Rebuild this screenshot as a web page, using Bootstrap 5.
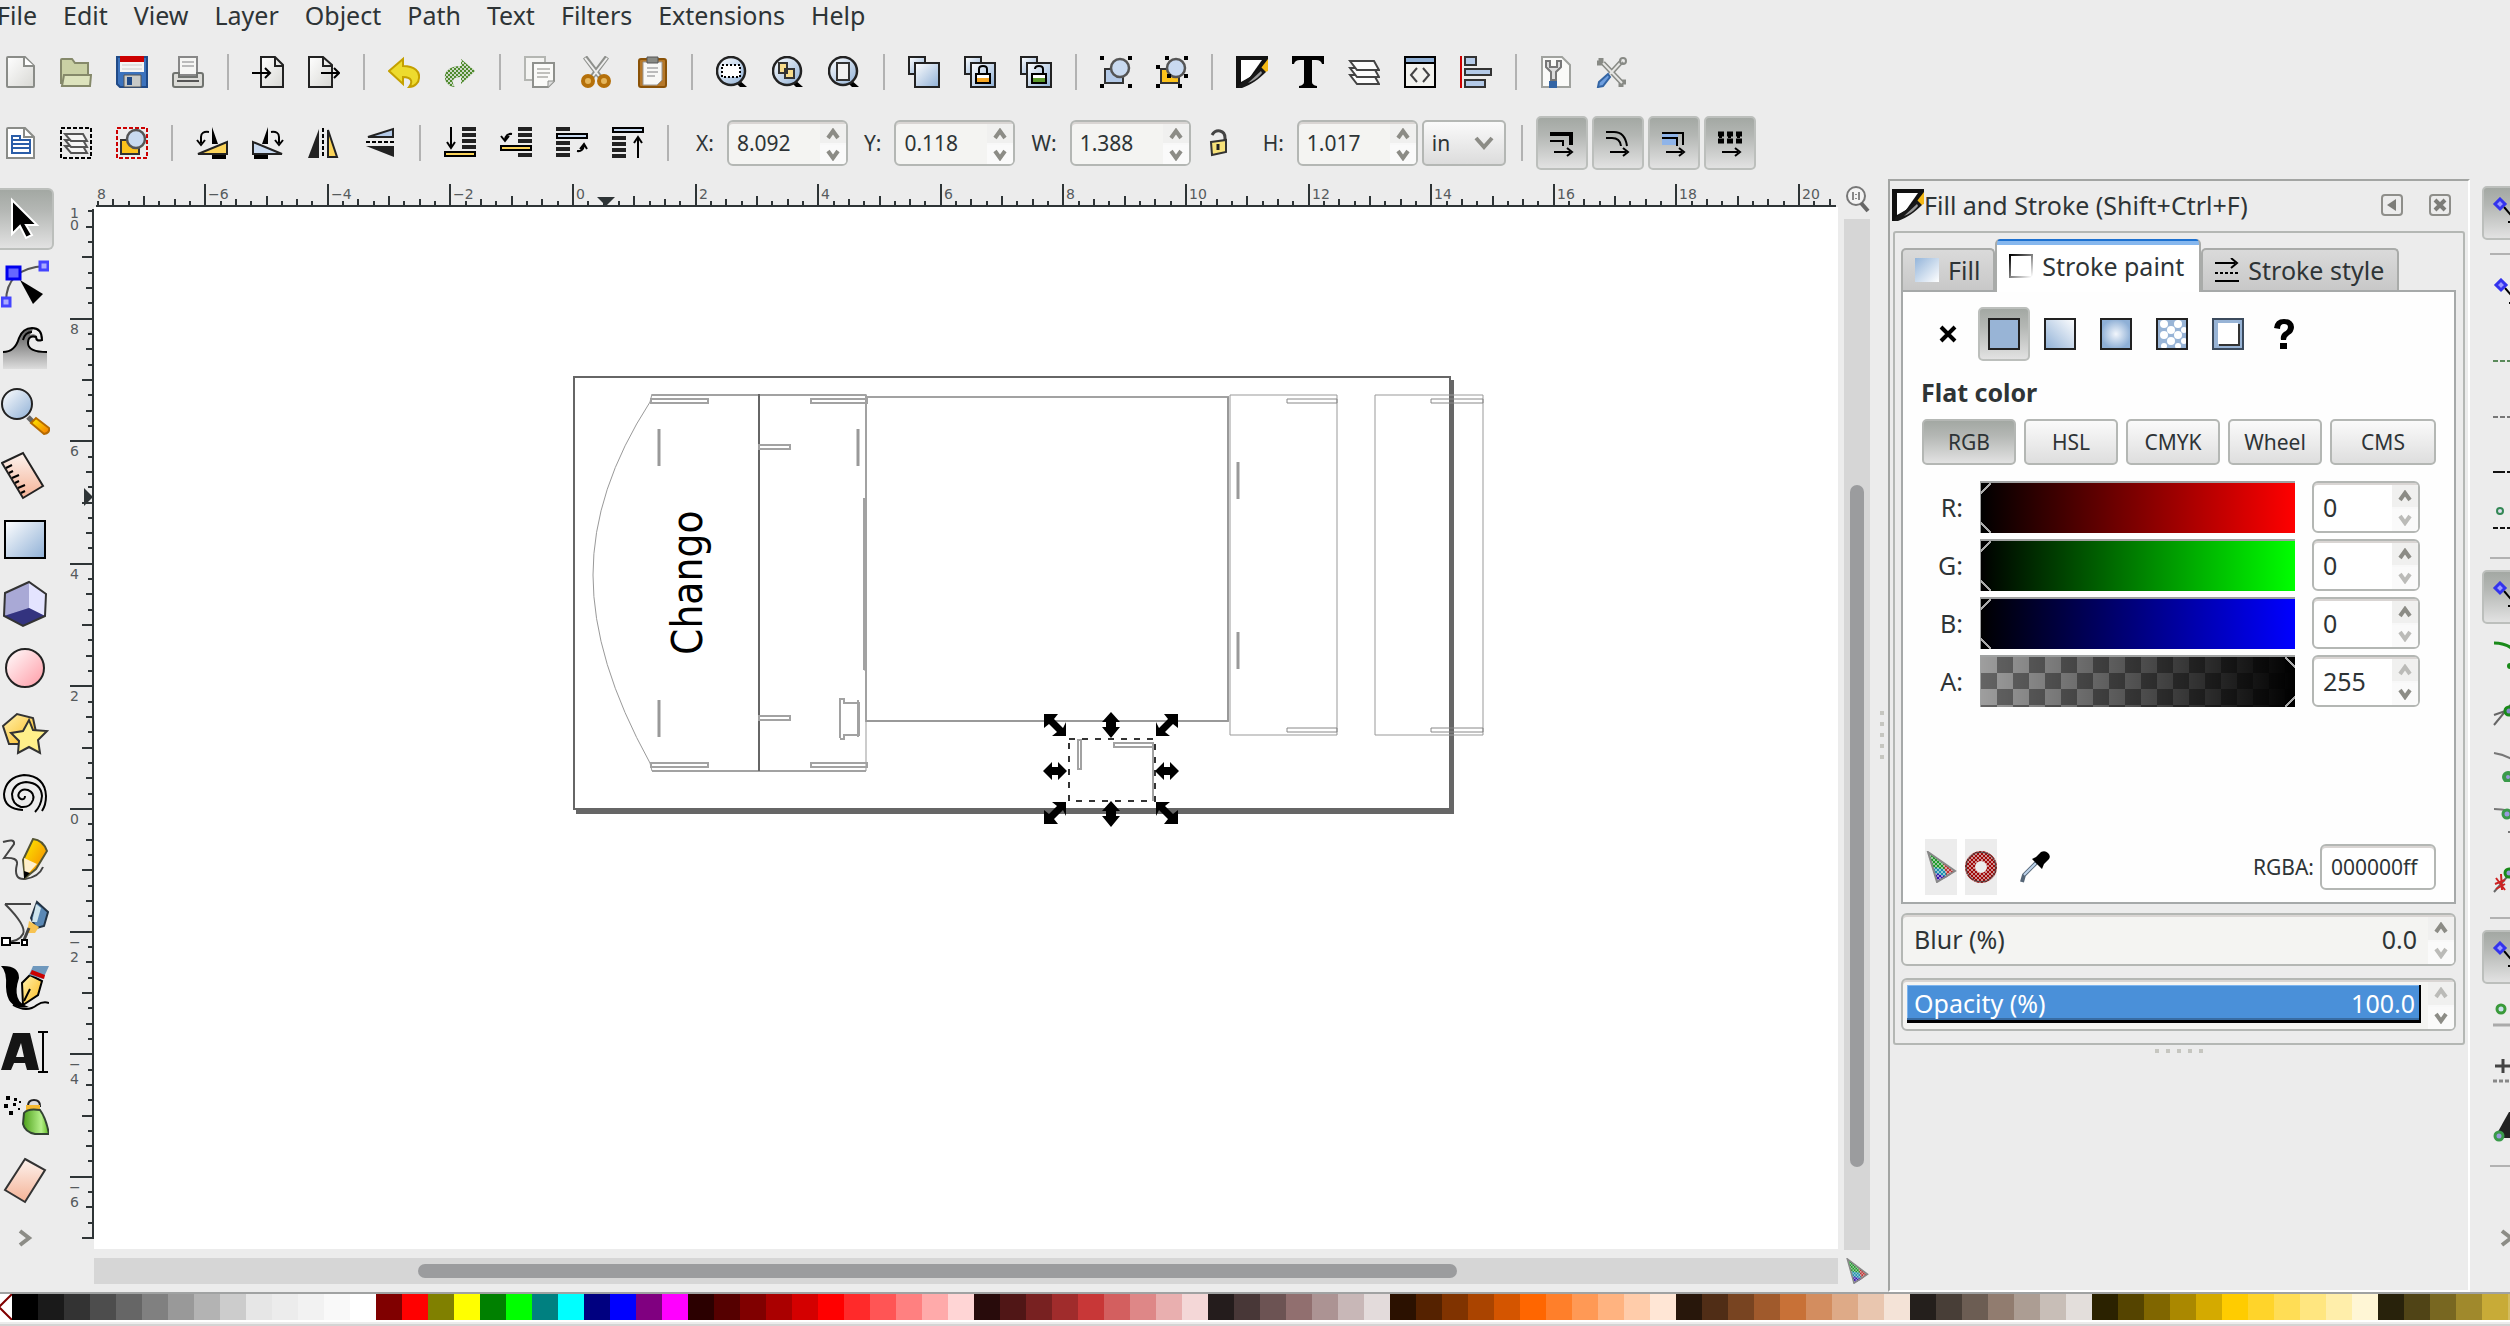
<!DOCTYPE html>
<html lang="en">
<head>
<meta charset="utf-8">
<meta name="viewport" content="width=device-width, initial-scale=1">
<title>Inkscape</title>
<link href="https://cdn.jsdelivr.net/npm/bootstrap@5.3.0/dist/css/bootstrap.min.css" rel="stylesheet">
<style>
:root{--ui:#ececec;--ink:#2e3436;--edge:#b4b7b4}
body{background:var(--ui);color:var(--ink);font:25px/34px "Noto Sans",sans-serif;height:100vh;overflow:hidden}
svg{display:block;flex:none}
button{color:inherit;font:inherit}
.menus{height:36px;gap:26px;padding-top:0}
.menus a{color:var(--ink);text-decoration:none;line-height:30px}
.menus a:first-child{margin-left:-3px}
.tools{height:72px;margin-left:-8px;font-size:21px}
.tools label{margin-right:13px}
.tool{width:56px;height:54px;border:0;background:none;padding:0;display:flex;align-items:center;justify-content:center;flex:none}
.on{background:linear-gradient(#a3a8a3,#b4b7b4 35%,#e2e2e2);border:2px solid #bcbfbc;border-radius:5px}
.tools .on{width:52px;margin:0 2px}
.vsep{width:24px;height:36px;flex:none;background:linear-gradient(#b2b2b2,#b2b2b2) center/2px 100% no-repeat}
.hsep{height:24px;flex:none;background:linear-gradient(#b2b2b2,#b2b2b2) 8px center/100% 2px no-repeat}
.spin{display:flex;border:2px solid var(--edge);border-radius:6px;background:#f4f4f2;box-shadow:inset 0 2px #d9d5d3;overflow:hidden;height:46px;width:121px}
.spin input{border:0;background:none;min-width:0;flex:1;color:var(--ink);padding:0 0 0 8px;font-size:21px;outline:0}
.spin .arrows{width:26px;flex:none;display:flex;flex-direction:column;background:#f8f8f8;gap:2px;margin-top:2px}
.spin .arrows button{flex:1;border:0;padding:0;background:#f0f0ef;display:flex;align-items:center;justify-content:center;color:#8c8c86;min-height:0}
.spin .arrows button:disabled{color:#bbbbb8}
.spin .arrows button:last-child{background:#fafafa}
.paint .spin{width:108px;height:52px;background:#fff}
.paint .spin input{font-size:25px;padding-left:9px}
.unit{appearance:none;width:84px;height:46px;border:2px solid var(--edge);border-radius:5px;background:linear-gradient(#fafafa,#dcdcdc);font-size:21px;padding:0 0 0 8px;color:var(--ink)}
.unitbox{display:grid}
.unitbox>*{grid-area:1/1}
.unitbox svg{justify-self:end;align-self:center;margin-right:12px;pointer-events:none}
.toolbox{width:66px;padding-top:9px}
.toolbox .tool{width:54px;height:64px;padding-right:5px}
.toolbox .on{border-left:0;border-radius:0 6px 6px 0;height:62px;margin-bottom:2px}
.ruler{background:var(--ui)}
.ruler text{font:14px "DejaVu Sans",sans-serif;fill:#555a5c}
.paper{background:#fff}
.trough{background:#d6d6d6}
.thumb{background:#9b9c9e;border-radius:7px}
.dots{display:flex;gap:7px;align-items:center;justify-content:center}
.dots i{width:4px;height:4px;background:#c6c6c0}
.dock{width:582px;border:2px solid #a3a5a3;border-right-color:#fff;border-bottom-color:#fff;border-left-width:2px}
.frame{border:2px solid var(--edge);border-radius:3px;margin:0 3px;padding:6px 7px 12px 6px}
.wbtn{width:22px;height:22px;padding:0;border:2px solid #8e8e8a;border-radius:4px;background:none;color:#7c7c78;display:flex;align-items:center;justify-content:center}
.tabs{border:0;flex-wrap:nowrap;align-items:flex-end}
.tabs .nav-link{display:flex;align-items:center;gap:9px;color:var(--ink);border:2px solid #a9aba9;border-bottom:0;border-radius:5px 5px 0 0;background:linear-gradient(#dadada,#c8c8c8);padding:0 13px 0 12px;height:42px;margin:0;white-space:nowrap}
.tabs .nav-link.active{background:linear-gradient(#1d71d0 2px,#86b7ee 2px,#86b7ee 6px,#fff 6px);border-color:#a9aba9;border-top:0;height:53px;color:var(--ink);padding:0 15px 0 12px;margin-bottom:-2px}
.page{background:#fefefe;border:2px solid #a6a9a9;height:614px;padding:15px 18px 7px}
.paints{margin-left:-1px}
.paints .on{width:52px;margin:0 2px}
.modes{gap:8px}
.modes .btn{flex:0 1 94px;height:46px;padding:0;font-size:21px;line-height:42px;border:2px solid var(--edge);border-radius:5px;background:linear-gradient(#fafafa,#dedede);color:var(--ink)}
.modes .btn:last-child{flex:1}
.modes .btn.on{background:linear-gradient(#a3a8a3,#b4b7b4 35%,#e2e2e2)}
.chan{display:grid;grid-template-columns:42px 1fr 108px;gap:6px 17px;align-items:center;margin-right:16px}
.chan label{text-align:right}
.chan input[type=range]{appearance:none;height:52px;width:100%;margin:0;border-top:2px solid #a0a2a2;border-left:1px solid #a0a2a2;background:var(--bar)}
.chan input[type=range]::-webkit-slider-thumb{appearance:none;width:10px;height:50px;background:linear-gradient(135deg,#000 6px,#aaa 6px,#aaa 8px,transparent 8px) top/10px 14px no-repeat,linear-gradient(45deg,#000 6px,#aaa 6px,#aaa 8px,transparent 8px) bottom/10px 14px no-repeat}
.chan input.alpha::-webkit-slider-thumb{background:linear-gradient(225deg,#000 6px,#aaa 6px,#aaa 8px,transparent 8px) top/10px 14px no-repeat,linear-gradient(315deg,#000 6px,#aaa 6px,#aaa 8px,transparent 8px) bottom/10px 14px no-repeat}
.ghost{width:32px;height:56px;border:0;padding:0;background:#ececec}
.rgba{width:116px;height:46px;border:2px solid var(--edge);border-radius:6px;box-shadow:inset 0 2px #d9d5d3;font-size:21px;color:var(--ink);padding:0 0 0 9px}
.meter.spin{width:auto;height:53px;align-items:stretch}
.meter .body{flex:1;display:flex;align-items:center;justify-content:space-between;margin:5px 7px 6px 4px;padding:0 4px 0 7px}
.meter .body input{text-align:right;font-size:25px;width:120px;flex:none;padding:0}
.full .body{background:#4a90d9;color:#fff;border-right:2px solid #000;border-bottom:3px solid #000;box-shadow:inset 0 -2px #386ca3,inset 1px 1px #7db4ee}
.full .body input{color:#fff}
.snap{width:40px;padding:7px 0 0 12px;overflow:hidden}
.snap .tool{height:56px;width:56px;padding-left:2px}
.snap .on{height:54px;margin-bottom:2px;padding:0}
.palette{border-top:2px solid #a0a2a2;margin-left:-14px;overflow:hidden}
.palette button{width:26px;height:26px;border:0;padding:0;flex:none}
.foot{height:6px;border-top:2px solid #fff;border-bottom:2px solid #d4d4d4;background:#ececec}
.ln{fill:none;stroke:#000;stroke-width:2}
</style>
</head>
<body class="d-flex flex-column">
<svg width="0" height="0" class="position-absolute" aria-hidden="true">
<defs>
<linearGradient id="gb" x1="0" y1="0" x2="1" y2="1"><stop offset="0" stop-color="#fff"/><stop offset="1" stop-color="#8fb0d6"/></linearGradient>
<linearGradient id="gb2" x1="1" y1="0" x2="0" y2="1"><stop offset="0" stop-color="#fff"/><stop offset="1" stop-color="#8fb0d6"/></linearGradient>
<linearGradient id="gf" x1="0" y1="0" x2="1" y2="1"><stop offset="0" stop-color="#94b5da"/><stop offset="1" stop-color="#fff"/></linearGradient>
<radialGradient id="gr"><stop offset="0" stop-color="#f2f6fc"/><stop offset="1" stop-color="#8fb0d6"/></radialGradient>
<linearGradient id="gp" x1="0" y1="0" x2="1" y2="1"><stop offset="0" stop-color="#fff"/><stop offset="1" stop-color="#d8d8d4"/></linearGradient>
<linearGradient id="gk" x1="0" y1="0" x2="1" y2="1"><stop offset="0" stop-color="#000"/><stop offset="1" stop-color="#fff"/></linearGradient>
<linearGradient id="gy" x1="0" y1="0" x2="1" y2="1"><stop offset="0" stop-color="#fff3b0"/><stop offset="1" stop-color="#fcb819"/></linearGradient>
<linearGradient id="go" x1="0" y1="0" x2="1" y2="1"><stop offset="0" stop-color="#fdf000"/><stop offset="1" stop-color="#f57900"/></linearGradient>
<linearGradient id="gpk" x1="0" y1="0" x2="1" y2="1"><stop offset="0" stop-color="#fff"/><stop offset="1" stop-color="#ff9aa5"/></linearGradient>
<linearGradient id="gsk" x1="0" y1="0" x2="0" y2="1"><stop offset="0" stop-color="#fdf3ee"/><stop offset="1" stop-color="#f4b296"/></linearGradient>
<linearGradient id="gw" x1="0" y1="0" x2="0" y2="1"><stop offset="0" stop-color="#555"/><stop offset="1" stop-color="#ddd"/></linearGradient>
<linearGradient id="gg" x1="0" y1="0" x2="1" y2="0"><stop offset="0" stop-color="#4ca019"/><stop offset=".7" stop-color="#b5f08a"/><stop offset="1" stop-color="#5cb81c"/></linearGradient>
<pattern id="dither" width="4" height="4" patternUnits="userSpaceOnUse"><rect width="2" height="2" fill="#ececec"/><rect x="2" y="2" width="2" height="2" fill="#ececec"/></pattern>
<symbol id="up" viewBox="0 0 14 12"><path d="M2 10 7 3l5 7" fill="none" stroke="currentColor" stroke-width="4"/></symbol>
<symbol id="down" viewBox="0 0 14 12"><path d="m2 2 5 7 5-7" fill="none" stroke="currentColor" stroke-width="4"/></symbol>
<symbol id="fillstroke" viewBox="0 0 32 32"><path d="M0 0h32v6L20 22 4 32H0z" fill="#111"/><path d="M5 4h21L14 21l-9 5z" fill="#fff"/><path d="m32 3-7 9 2 5 5-2z" fill="#f5b915"/><path d="m25 11 5 5C22 24 16 28 6 32c-3 1-5-1-2-4 6-4 13-9 21-17z" fill="#181818"/><path d="m25 15 1 2c-5 6-9 8-14 10z" fill="#999"/></symbol>
<symbol id="lens" viewBox="0 0 32 32"><path d="m22 23 9 8H24l-4-4z" fill="#000"/><circle cx="15" cy="15" r="14" fill="url(#gb)" stroke="#222" stroke-width="2.500"/></symbol>
<symbol id="dup" viewBox="0 0 32 32"><path d="M1 1h16v17H1z" fill="url(#gb)" stroke="#222" stroke-width="2"/><path d="M7 7h24v24H7z" fill="url(#gb)" stroke="#222" stroke-width="2"/></symbol>
<symbol id="shapes" viewBox="0 0 32 32"><path d="M5 13h18v14H5z" fill="currentColor" stroke="#333" stroke-width="2"/><circle cx="20" cy="12" r="9" fill="#c9daf0" stroke="#555" stroke-width="2.500"/></symbol>
<symbol id="corners" viewBox="0 0 32 32"><path d="M0 0h4v4H0zM28 0h4v4h-4zM0 28h4v4H0zM28 28h4v4h-4z"/></symbol>
<symbol id="snapnode" viewBox="0 0 32 32"><path d="m10 10 12 14m1-7v8h-9" fill="none" stroke="#000" stroke-width="2"/><path d="M6 2 11 7 6 12 1 7z" fill="#99f" stroke="#33e" stroke-width="3"/></symbol>
<symbol id="cms" viewBox="0 0 32 32"><path d="M3 1 30 20 12 31z" fill="#1f9a2a"/><path d="M7 16 30 20 12 31z" fill="#1b8fae"/><path d="m18 12 12 8-8 6z" fill="#c03030"/><path d="m10 22 12 4-10 5z" fill="#3510b0"/><path d="M3 1 30 20 12 31z" fill="url(#dither)" fill-opacity=".6" stroke="#888" stroke-width="2"/></symbol>
</defs>
</svg>

<nav class="menus d-flex" aria-label="Menu">
<a href="#">File</a><a href="#">Edit</a><a href="#">View</a><a href="#">Layer</a><a href="#">Object</a><a href="#">Path</a><a href="#">Text</a><a href="#">Filters</a><a href="#">Extensions</a><a href="#">Help</a>
</nav>

<div class="tools d-flex align-items-center" role="toolbar" aria-label="Commands">
<button class="tool" aria-label="New"><svg width="32" height="32"><path d="M3 2q0-1 1-1h17l9 9v20q0 1-1 1H4q-1 0-1-1z" fill="url(#gp)" stroke="#8a8c88" stroke-width="2"/><path d="M20 1v9h10" fill="#fff" stroke="#8a8c88" stroke-width="2"/></svg></button>
<button class="tool" aria-label="Open"><svg width="32" height="32"><path d="M1 28V4q0-1 1-1h10l3 4h13v14" fill="#c9d0a4" stroke="#85896a" stroke-width="2"/><path d="M4 19h27l-1 11H2z" fill="#dde3bd" stroke="#85896a" stroke-width="2"/></svg></button>
<button class="tool" aria-label="Save"><svg width="32" height="32"><path d="M1 1h30v30H4l-3-3z" fill="#3b72bd" stroke="#204a87" stroke-width="2"/><path d="M4 0h24v6H4z" fill="#c00"/><path d="M4 6h24v10H4z" fill="#f4f4f4"/><path d="M6 9h20M6 13h20" stroke="#ccc"/><path d="M8 19h17v12H8z" fill="#c8cac8" stroke="#555"/><path d="M11 21h5v8h-5z" fill="#204a87"/></svg></button>
<button class="tool" aria-label="Print"><svg width="32" height="32"><path d="M7 1h18v18H7z" fill="#f6f6f4" stroke="#888" stroke-width="2"/><path d="M10 6h12M10 10h12" stroke="#bbb" stroke-width="2"/><path d="M1 19q0-2 2-2h4v4h18v-4h4q2 0 2 2v10q0 2-2 2H3q-2 0-2-2z" fill="#dcdcd8" stroke="#70736f" stroke-width="2"/><path d="M5 25h22" stroke="#555" stroke-width="2"/></svg></button>
<span class="vsep"></span>
<button class="tool" aria-label="Import"><svg width="32" height="32"><path d="M9 1h14l8 8v22H9z" fill="url(#gp)" stroke="#222" stroke-width="2"/><path d="M23 1v9h8" fill="none" stroke="#222" stroke-width="2"/><path d="M0 17h18m-5-5 5 5-5 5" class="ln"/></svg></button>
<button class="tool" aria-label="Export"><svg width="32" height="32"><path d="M1 1h14l9 8v22H1z" fill="url(#gp)" stroke="#222" stroke-width="2"/><path d="M15 1v9h9" fill="none" stroke="#222" stroke-width="2"/><path d="M13 17h18m-5-5 5 5-5 5" class="ln"/></svg></button>
<span class="vsep"></span>
<button class="tool" aria-label="Undo"><svg width="32" height="32"><path d="M1 15 15 3v7c12 0 17 6 16 12 0 4-4 9-10 9 4-5 3-10-6-10v7z" fill="#eddb2e" stroke="#c4a000" stroke-width="2"/></svg></button>
<button class="tool" aria-label="Redo"><svg width="32" height="32"><path d="M31 15 17 3v7C5 10 0 16 1 22c0 4 4 9 10 9-4-5-3-10 6-10v7z" fill="#4e8a2c"/><path d="M31 15 17 3v7C5 10 0 16 1 22c0 4 4 9 10 9-4-5-3-10 6-10v7z" fill="url(#dither)" fill-opacity=".8"/></svg></button>
<span class="vsep"></span>
<button class="tool" aria-label="Copy"><svg width="32" height="32"><path d="M1 1h20v23H1z" fill="#f4f4f2" stroke="#b4b6b2" stroke-width="2"/><path d="M9 7h21v18l-6 6H9z" fill="#fafaf8" stroke="#8e908c" stroke-width="2"/><path d="M13 13h13M13 17h13M13 21h11" stroke="#c0c0bc" stroke-width="2"/><path d="M30 25h-6v6" fill="#ddd" stroke="#8e908c"/></svg></button>
<button class="tool" aria-label="Cut"><svg width="32" height="32"><path d="M5 1 20 21M27 1 12 21" stroke="#8e908c" stroke-width="5"/><path d="M5 2 19 20M27 2 13 20" stroke="#eee" stroke-width="2"/><circle cx="8" cy="25" r="5" fill="#e5b65c" stroke="#b5700a" stroke-width="4"/><circle cx="24" cy="25" r="5" fill="#e5b65c" stroke="#b5700a" stroke-width="4"/></svg></button>
<button class="tool" aria-label="Paste"><svg width="32" height="32"><rect x="3" y="3" width="27" height="28" rx="2" fill="#b5782a" stroke="#8a5207" stroke-width="2"/><path d="M7 6h19v18l-5 5H7z" fill="#f8f8f6" stroke="#999"/><path d="M11 1h11v6H11z" fill="#888a85" stroke="#555"/><path d="M11 12h11M11 16h11M11 20h8" stroke="#bbb" stroke-width="2"/></svg></button>
<span class="vsep"></span>
<button class="tool" aria-label="Zoom selection"><svg width="32" height="32"><use href="#lens"/><path d="M6 9h18v12H6z" fill="#fff" stroke="#000" stroke-width="2" stroke-dasharray="2 2"/></svg></button>
<button class="tool" aria-label="Zoom drawing"><svg width="32" height="32"><use href="#lens"/><path d="M7 7h8v10H7zM13 13h9v9h-9z" fill="#f7dc8c" stroke="#333" stroke-width="2"/></svg></button>
<button class="tool" aria-label="Zoom page"><svg width="32" height="32"><use href="#lens"/><path d="M9 7h12v17H9z" fill="#f2f2f2" stroke="#333" stroke-width="2"/></svg></button>
<span class="vsep"></span>
<button class="tool" aria-label="Duplicate"><svg width="32" height="32"><use href="#dup"/></svg></button>
<button class="tool" aria-label="Clone"><svg width="32" height="32"><use href="#dup"/><path d="M12 18h14v9H12z" fill="#f5a623" stroke="#000" stroke-width="2"/><path d="M15 18v-5q0-3 4-3t4 3v5" class="ln"/><path d="M13 19h12v3H13z" fill="#fff"/></svg></button>
<button class="tool" aria-label="Unlink clone"><svg width="32" height="32"><use href="#dup"/><path d="M12 18h14v9H12z" fill="#5c9a2c" stroke="#000" stroke-width="2"/><path d="M15 13q0-3 4-3t4 3v5" class="ln"/><path d="M13 19h12v3H13z" fill="#fff"/></svg></button>
<span class="vsep"></span>
<button class="tool" aria-label="Group"><svg width="32" height="32" color="#b4cae8"><use href="#shapes"/><use href="#corners"/></svg></button>
<button class="tool" aria-label="Ungroup"><svg width="32" height="32" color="#fcc21b"><use href="#shapes"/><path d="M9 0h4v4H9zM28 0h4v4h-4zM0 9h4v4H0zM28 18h4v4h-4zM0 28h4v4H0zM22 28h4v4h-4zM11 18h4v4h-4z"/></svg></button>
<span class="vsep"></span>
<button class="tool" aria-label="Fill and stroke"><svg width="32" height="32"><use href="#fillstroke"/></svg></button>
<button class="tool" aria-label="Text and font"><svg width="32" height="32"><path d="M0 0h32v8h-2q-1-4-6-4h-4v22q0 3 5 4v2H7v-2q5-1 5-4V4H8Q3 4 2 8H0z"/></svg></button>
<button class="tool" aria-label="Layers"><svg width="32" height="32" fill="#fcfcfc" stroke="#444" stroke-width="2"><path d="M2 19h24l5 9H9z"/><path d="M2 12h24l5 9H9z"/><path d="M2 5h24l5 9H9z"/></svg></button>
<button class="tool" aria-label="XML editor"><svg width="32" height="32"><path d="M1 1h30v30H1z" fill="#f3f3ef" stroke="#000" stroke-width="2"/><path d="M2 2h28v5H2z" fill="#8fb0d6"/><path d="M1 7h30" stroke="#000" stroke-width="2"/><path d="m13 12-6 7 6 7M19 12l6 7-6 7" fill="none" stroke="#444" stroke-width="2"/></svg></button>
<button class="tool" aria-label="Align and distribute"><svg width="32" height="32"><path d="M1 0v32" stroke="#c00" stroke-width="2"/><path d="M5 1h11v8H5zM5 13h26v6H5zM5 24h20v7H5z" fill="#b4cae8" stroke="#333" stroke-width="2"/></svg></button>
<span class="vsep"></span>
<button class="tool" aria-label="Document properties"><svg width="32" height="32"><path d="M2 1h20l8 8v22H2z" fill="#fafaf8" stroke="#a0a29e" stroke-width="2"/><path d="M6 5v6l5 5v8h5v-8l5-5V5h-4v6h-7V5z" fill="#ddd" stroke="#777" stroke-width="2"/><path d="M9 25h8v7H9z" fill="#3465a4"/></svg></button>
<button class="tool" aria-label="Preferences"><svg width="32" height="32" fill="none"><path d="m7 7 19 20M5 2v5H1M30 26h-5v5M26 5 14 18" stroke="#888a85" stroke-width="5"/><path d="m7 7 19 20M26 5 14 18" stroke="#e6e6e4" stroke-width="2"/><circle cx="27" cy="5" r="3" stroke="#888a85" stroke-width="2"/><path d="m12 18 2 3-7 9-5 1 1-5z" fill="#6f9fe0" stroke="#3465a4" stroke-width="2"/></svg></button>
</div>

<div class="tools d-flex align-items-center" role="toolbar" aria-label="Selector controls">
<button class="tool" aria-label="Select all"><svg width="32" height="32"><path d="M3 2q0-1 1-1h17l9 9v21H3z" fill="#fff" stroke="#8a8c88" stroke-width="2"/><path d="M20 1v9h10" fill="none" stroke="#8a8c88" stroke-width="2"/><path d="M8 9h8v4h10v13H8z" fill="#fff" stroke="#2a5da8" stroke-width="2"/><path d="M8 13h14M8 17h18M8 21h18" stroke="#2a5da8" stroke-width="2"/></svg></button>
<button class="tool" aria-label="Select all in layers"><svg width="32" height="32"><path d="M1 1h30v30H1z" fill="none" stroke="#000" stroke-width="2" stroke-dasharray="4 2"/><g fill="#f6f6f6" stroke="#555" stroke-width="2"><path d="M5 19h18l4 7H11z"/><path d="M5 13h18l4 7H11z"/><path d="M5 7h18l4 7H11z"/></g></svg></button>
<button class="tool" aria-label="Deselect"><svg width="32" height="32" color="#fcc21b"><path d="M1 1h30v30H1z" fill="none" stroke="#c00" stroke-width="2" stroke-dasharray="4 2"/><use href="#shapes"/></svg></button>
<span class="vsep"></span>
<button class="tool" aria-label="Rotate left"><svg width="32" height="32"><path d="M16 0 22 17H16zM16 28h14v4H16z"/><path d="M2 27 31 15v12z" fill="#fbd45a" stroke="#222" stroke-width="2"/><path d="M13 5Q5 4 5 10v6M1 13l4 5 4-5" class="ln"/></svg></button>
<button class="tool" aria-label="Rotate right"><svg width="32" height="32"><path d="m16 0-6 17h6zM2 28h14v4H2z"/><path d="M30 27 1 15v12z" fill="#c9daf0" stroke="#222" stroke-width="2"/><path d="M19 5q8-1 8 5v6m4-3-4 5-4-5" class="ln"/></svg></button>
<button class="tool" aria-label="Flip horizontal"><svg width="32" height="32"><path d="M11 2v29H0z" fill="#222"/><path d="M15 1v30" stroke="#000" stroke-width="2" stroke-dasharray="4 2"/><path d="M20 3v27h9z" fill="#fbd45a" stroke="#222" stroke-width="2"/></svg></button>
<button class="tool" aria-label="Flip vertical"><svg width="32" height="32"><path d="M2 19h28v11z" fill="#222"/><path d="M2 15h28" stroke="#000" stroke-width="2" stroke-dasharray="4 2"/><path d="M4 10h25V2z" fill="#b4cae8" stroke="#222" stroke-width="2"/></svg></button>
<span class="vsep"></span>
<button class="tool" aria-label="Lower to bottom"><svg width="32" height="32"><path d="M7 0v20M3 15l4 6 4-6" class="ln"/><path d="M18 2h14M18 8h14M18 14h14M18 20h14" stroke="#222" stroke-width="4"/><path d="M1 25h30v4H1z" fill="#fbd45a" stroke="#000" stroke-width="2"/></svg></button>
<button class="tool" aria-label="Lower"><svg width="32" height="32"><path d="M12 7q-6-1-7 6M1 9l4 5 4-5" class="ln"/><path d="M18 2h14M18 8h14M18 14h14M18 28h14" stroke="#222" stroke-width="4"/><path d="M1 19h30v4H1z" fill="#fbd45a" stroke="#000" stroke-width="2"/></svg></button>
<button class="tool" aria-label="Raise"><svg width="32" height="32"><path d="M21 24q6 1 7-6m-4 4 4-5 3 5" class="ln"/><path d="M0 2h14M0 16h14M0 22h14M0 28h14" stroke="#222" stroke-width="4"/><path d="M1 7h30v4H1z" fill="#c9daf0" stroke="#000" stroke-width="2"/></svg></button>
<button class="tool" aria-label="Raise to top"><svg width="32" height="32"><path d="M26 31V10m-4 6 4-6 4 6" class="ln"/><path d="M0 11h14M0 17h14M0 23h14M0 29h14" stroke="#222" stroke-width="4"/><path d="M1 1h30v4H1z" fill="#c9daf0" stroke="#000" stroke-width="2"/></svg></button>
<span class="vsep me-3"></span>
<label for="px">X:</label><div class="spin me-3"><input id="px" value="8.092"><span class="arrows"><button aria-label="Increase X"><svg width="14" height="12"><use href="#up"/></svg></button><button aria-label="Decrease X"><svg width="14" height="12"><use href="#down"/></svg></button></span></div>
<label for="py">Y:</label><div class="spin me-3"><input id="py" value="0.118"><span class="arrows"><button aria-label="Increase Y"><svg width="14" height="12"><use href="#up"/></svg></button><button aria-label="Decrease Y"><svg width="14" height="12"><use href="#down"/></svg></button></span></div>
<label for="pw">W:</label><div class="spin me-3"><input id="pw" value="1.388"><span class="arrows"><button aria-label="Increase W"><svg width="14" height="12"><use href="#up"/></svg></button><button aria-label="Decrease W"><svg width="14" height="12"><use href="#down"/></svg></button></span></div>
<button class="tool w-auto me-4 pe-2" aria-label="Lock proportions"><svg width="24" height="28"><path d="M5 6q3-5 8-4t5 7v5" fill="none" stroke="#444" stroke-width="3"/><path d="M4 13 19 11v12L5 26z" fill="#f7e27a" stroke="#333" stroke-width="2"/><path d="M11 15v6" stroke="#222" stroke-width="3"/></svg></button>
<label for="ph">H:</label><div class="spin me-1"><input id="ph" value="1.017"><span class="arrows"><button aria-label="Increase H"><svg width="14" height="12"><use href="#up"/></svg></button><button aria-label="Decrease H"><svg width="14" height="12"><use href="#down"/></svg></button></span></div>
<div class="unitbox"><select class="unit" aria-label="Unit"><option>in</option></select><svg width="20" height="14" fill="none" stroke="#8c8c86" stroke-width="4"><path d="m2 2 8 9 8-9"/></svg></div>
<span class="vsep ms-1"></span>
<button class="tool on" aria-label="Scale stroke width"><svg width="32" height="32"><path d="M4 7h21v11" fill="none" stroke="#000" stroke-width="4"/><path d="M4 14h13v5" class="ln"/><path d="M8 25h16m-3-4 5 4-5 4" fill="none" stroke="#000" stroke-width="2"/></svg></button>
<button class="tool on" aria-label="Scale corners"><svg width="32" height="32"><path d="M4 5h8q11 0 13 14M4 11h6q8 0 9 8" class="ln"/><path d="M8 25h16m-3-4 5 4-5 4" fill="none" stroke="#000" stroke-width="2"/></svg></button>
<button class="tool on" aria-label="Move gradients"><svg width="32" height="32"><path d="M4 6h16v12H4z" fill="#8fb4e8"/><path d="M4 6h21v12M4 11h15v8" class="ln"/><path d="M8 25h16m-3-4 5 4-5 4" fill="none" stroke="#000" stroke-width="2"/></svg></button>
<button class="tool on" aria-label="Move patterns"><svg width="32" height="32"><path d="M4 7h24M4 14h24" stroke="#000" stroke-width="5" stroke-dasharray="6 3"/><path d="M5 10h22" stroke="#000" stroke-width="2" stroke-dasharray="3 6"/><path d="M8 25h16m-3-4 5 4-5 4" fill="none" stroke="#000" stroke-width="2"/></svg></button>
</div>

<main class="d-flex flex-grow-1" style="min-height:0">
<div class="toolbox d-flex flex-column flex-shrink-0" role="toolbar" aria-label="Tools">
<button class="tool on" aria-label="Select"><svg width="42" height="44"><path d="M9 3v34l8-8 6 12 6-3-6-10h11z" fill="#000" stroke="#fff" stroke-width="2"/></svg></button>
<button class="tool" aria-label="Edit nodes"><svg width="48" height="48"><path d="M5 42Q5 8 44 6" fill="none" stroke="#555" stroke-width="2"/><path d="M6 7h13v12H6z" fill="#66f" stroke="#00e" stroke-width="3"/><path d="M39 2h8v8h-8zM1 38h8v8H1z" fill="#aaf" stroke="#44f" stroke-width="3"/><path d="m19 20 23 14-10 10z"/></svg></button>
<button class="tool" aria-label="Tweak"><svg width="48" height="48"><path d="M2 28Q14 28 18 14 22 4 31 4q10 0 10 12-6 2-6-3-8-2-8 6 0 9 19 9v17H2z" fill="url(#gw)"/><path d="M32 5q8 1 8 10-4 1-4-3-3-3-7-1" fill="#eee"/><path d="M2 28Q14 28 18 14 22 4 31 4q10 0 10 12-6 2-6-3-8-2-8 6 0 9 19 9M22 16q2-8 9-8" class="ln"/></svg></button>
<button class="tool" aria-label="Zoom"><svg width="50" height="50"><path d="m28 30 5 5" stroke="#666" stroke-width="5"/><path d="m31 36 5-5 13 10q1 5-5 6z" fill="url(#go)" stroke="#b56a00" stroke-width="2"/><circle cx="17" cy="17" r="15" fill="url(#gb)" stroke="#222" stroke-width="2"/></svg></button>
<button class="tool" aria-label="Measure"><svg width="48" height="50"><path d="M1 12 22 2l20 33-20 12z" fill="url(#gsk)" stroke="#222" stroke-width="2"/><path d="m5 17 6-3M8 22l4-2M11 27l7-3M14 32l4-2M17 37l7-3M20 42l4-2" class="ln"/></svg></button>
<button class="tool" aria-label="Rectangle"><svg width="44" height="44"><path d="M2 3h40v37H2z" fill="url(#gb)" stroke="#000" stroke-width="2"/></svg></button>
<button class="tool" aria-label="3D box"><svg width="48" height="48"><path d="M4 13 28 2l17 12-1 22-22 10L3 36z" fill="#8a8ac8"/><path d="m4 13 24-11v26L3 36z" fill="#a9a9d6"/><path d="m28 2 17 12-1 22-16-8z" fill="#e4e4ff"/><path d="m28 28 16 8-22 10-19-10z" fill="#33337f"/><path d="M4 13 28 2l17 12-1 22-22 10L3 36z" fill="none" stroke="#333" stroke-width="2"/></svg></button>
<button class="tool" aria-label="Ellipse"><svg width="44" height="44"><circle cx="22" cy="22" r="19" fill="url(#gpk)" stroke="#222" stroke-width="2"/></svg></button>
<button class="tool" aria-label="Star"><svg width="48" height="48"><path d="m2 18 14-12 16 4 3 14-12 12H8z" fill="url(#gy)" stroke="#333" stroke-width="2"/><path d="m28 12 4 10 14 1-9 9 2 13-11-6-11 6 1-12-8-8 12-2z" fill="#fff08a" stroke="#333" stroke-width="2"/></svg></button>
<button class="tool" aria-label="Spiral"><svg width="48" height="48"><path d="M24 24q0 4-4 3-4-2-2-6 3-5 9-3 7 3 5 10-3 8-12 7-9-3-9-13 2-11 14-12 15 1 16 14-1 10-7 16M22 38Q3 37 3 22 5 5 23 3q21 1 22 21 0 9-4 15" class="ln"/></svg></button>
<button class="tool" aria-label="Pencil"><svg width="48" height="48"><path d="M2 6q12-4 11 2L3 22q14-1 13 6-4 16 8 15 14-2 18-12" class="ln" style="stroke:#444"/><path d="m22 24 10-21q10 1 14 12L35 33 24 42z" fill="url(#go)" stroke="#553" stroke-width="2"/><path d="m23 22 13 6-12 13z" fill="#fff0cc"/><path d="m23 35 6 2-6 6z"/></svg></button>
<button class="tool" aria-label="Bezier"><svg width="48" height="48"><path d="M4 4h26M4 4q22 22 18 30-4 8-18 8" class="ln" style="stroke:#444"/><path d="m30 18 6-16 11 10-4 14-8 2z" fill="#5a88b5" stroke="#234" stroke-width="2"/><path d="m35 4 5 4-4 14h-5z" fill="#cfe5ee"/><path d="m28 21 10 6-4 6h-8z" fill="#f7c352"/><path d="m28 28-5 12" stroke="#444" stroke-width="3"/><path d="M1 38h8v7H1z" fill="#fff" stroke="#000" stroke-width="2"/><path d="M9 43h10" class="ln"/><path d="M21 40h5v5h-5z" fill="#fff" stroke="#000" stroke-width="2"/></svg></button>
<button class="tool" aria-label="Calligraphy"><svg width="48" height="50"><path d="M0 3q18-1 18 12-8 24 10 29Q6 48 5 24 6 8 0 3z"/><path d="M12 42q14 8 24 0 6-4 12-2" class="ln"/><path d="m22 42-1-22 8-8 12 6-4 14z" fill="url(#gy)" stroke="#000" stroke-width="2"/><path d="m23 38 6-12" class="ln"/><path d="m28 12 4-9h16l-6 13z" fill="#6f98bd"/><path d="m29 11 14 5 1-4-13-5z" fill="#c00"/></svg></button>
<button class="tool" aria-label="Text"><svg width="50" height="48"><path d="M13 5h17l9 37H27l-2-7H14l-3 7H1zm8 10-5 14h8z" fill="#151515" fill-rule="evenodd"/><path d="M38 4h10M43 4v40M38 44h10" stroke="#000" stroke-width="2"/></svg></button>
<button class="tool" aria-label="Spray"><svg width="48" height="50"><path d="M5 5h4v4H5zM3 13h4v4H3zM8 20h4v4H8zM12 12h3v3h-3zM13 7h3v3h-3zM18 10h2v2h-2zM17 17h2v2h-2z"/><path d="M27 15q0-6 6-6t6 6z" fill="#ddd" stroke="#222" stroke-width="2"/><path d="M25 14h14v5H25z" fill="#f5b930"/><path d="M23 22q4-5 16-3 6 8 9 24H34q-10-2-12-10z" fill="url(#gg)" stroke="#343" stroke-width="2"/></svg></button>
<button class="tool" aria-label="Eraser"><svg width="48" height="50"><path d="M24 4 44 15 24 47 4 35z" fill="url(#gsk)" stroke="#333" stroke-width="2"/></svg></button>
<button class="tool border-0" aria-label="More tools" style="height:52px"><svg width="16" height="20"><path d="m3 3 9 7-9 7" fill="none" stroke="#8c8c86" stroke-width="4"/></svg></button>
</div>

<section class="d-flex flex-column flex-grow-1" style="min-width:0">
<div class="d-flex"><div style="width:28px"></div><svg id="hruler" class="ruler flex-grow-1 flex-shrink-1" height="28" style="width:0"></svg></div>
<div class="d-flex flex-grow-1" style="min-height:0">
<svg id="vruler" class="ruler" width="28" height="1034"></svg>
<svg class="paper flex-grow-1 flex-shrink-1 h-100" style="width:0" role="img" aria-label="Drawing">
<g transform="translate(-94 -207)" fill="none" stroke="#a2a2a2" stroke-width="2">
<path d="M576 809h878v5H576zM1450 380h4v434h-4z" fill="#666" stroke="none"/>
<path d="M574 377h876v432H574z" stroke="#666"/>
<path d="M866 394v103l-2 3v169l2 3v99H652l-2-8Q593 660 593 575T650 402l2-8" stroke="#999" stroke-width="1"/>
<path d="M652 395h214M866 395v102M864 498v172M866 672v50M652 771h214"/>
<path d="M759 394v377" stroke="#666"/>
<path d="M651 399h57v4h-57zM811 399h56v4h-56zM651 763h57v4h-57zM811 763h56v4h-56zM759 445h31v4h-31zM759 716h31v4h-31z"/>
<path d="M659 429v37M858 429v37M659 700v37M1238 462v37M1238 632v37" stroke="#999" stroke-width="3"/>
<path d="M840 738v-39h4v4h15v32h-15v4h-4M858 700v37"/>
<path d="M866 397h362v324H866z"/><path d="M1228 397v324M866 721h362" stroke="#999"/>
<path d="M1230 395h107v340h-107zM1375 395h108v340h-108z" stroke="#999" stroke-width="1"/>
<path d="M1287 399h50v4h-50zM1431 399h52v4h-52zM1287 728h50v4h-50zM1431 728h52v4h-52z" stroke="#888" stroke-width="1"/>
<path d="M1078 740h3v29h-3zM1114 743h39v4h-39zM1153 747v54"/>
<path d="M1069 739h86v62h-86z" stroke="#333" stroke-dasharray="6 7"/>
<g fill="#000" stroke="none">
<path d="M1044 714h14l-4 5 9 9 3-6v14h-14l5-4-8-8-5 4z"/>
<path d="M1178 714h-14l4 5-9 9-3-6v14h14l-5-4 8-8 5 4z"/>
<path d="M1044 824h14l-4-5 9-9 3 6v-14h-14l5 4-8 8-5-4z"/>
<path d="M1178 824h-14l4-5-9-9-3 6v-14h14l-5 4 8 8 5-4z"/>
<path d="m1111 712 9 10h-4v5h4l-9 11-9-11h4v-5h-4zM1111 801l9 10h-4v5h4l-9 11-9-11h4v-5h-4zM1043 771l9-9v5h6v-5l9 9-9 9v-5h-6v5zM1155 771l9-9v5h6v-5l9 9-9 9v-5h-6v5z"/>
</g>
<text transform="translate(702 655) rotate(-90)" style="font:42px 'DejaVu Sans Condensed','DejaVu Sans',sans-serif" fill="#000" stroke="none">Chango</text>
</g></svg>
</div>
<div class="d-flex" style="height:43px;padding:9px 0 0 28px"><div class="trough flex-grow-1" style="height:26px;padding:6px 0 0 324px"><div class="thumb" style="width:73.200%;height:14px"></div></div></div>
</section>

<div class="d-flex flex-column align-items-center" style="width:38px;padding:6px 0 8px">
<svg width="26" height="28"><circle cx="12" cy="11" r="9" fill="#f4f4f4" stroke="#777" stroke-width="2"/><path d="m17 18 7 8" stroke="#666" stroke-width="4"/><path d="M9 7v8M15 7v8M12 9v1M12 13v1" stroke="#888" stroke-width="2"/></svg>
<div class="trough flex-grow-1 w-auto" style="margin-top:6px;padding:266px 6px 0"><div class="thumb" style="width:14px;height:682px"></div></div>
<svg class="mt-2" width="24" height="26" viewBox="0 0 32 32" preserveAspectRatio="none"><use href="#cms"/></svg>
</div>
<div class="dots flex-column" style="width:12px;padding-bottom:2px"><i></i><i></i><i></i><i></i><i></i></div>

<aside class="dock d-flex flex-column flex-shrink-0">
<header class="d-flex align-items-center" style="height:50px;padding:0 17px 3px 2px"><svg width="32" height="32"><use href="#fillstroke"/></svg><span class="flex-grow-1">&#8203;Fill and Stroke (Shift+Ctrl+F)</span>
<button class="wbtn" style="margin-right:26px" aria-label="Iconify"><svg width="12" height="12"><path d="M10 0v12L1 6z" fill="currentColor"/></svg></button><button class="wbtn" aria-label="Close"><svg width="14" height="14"><path d="m2 2 10 10M12 2 2 12" stroke="currentColor" stroke-width="4"/></svg></button></header>
<div class="frame">
<ul class="nav nav-tabs tabs">
<li class="nav-item"><button class="nav-link"><svg width="24" height="24"><path d="M0 0h24v24H0z" fill="url(#gf)"/></svg>Fill</button></li>
<li class="nav-item"><button class="nav-link active"><svg width="24" height="24"><path d="M1 1h22v22H1z" fill="#fff" stroke="url(#gk)" stroke-width="2"/></svg>Stroke paint</button></li>
<li class="nav-item"><button class="nav-link"><svg width="24" height="24"><path d="M0 5h20m-4-5 6 5-6 5M0 23h24" class="ln"/><path d="M0 15h24" stroke="#000" stroke-width="2" stroke-dasharray="3 2"/></svg>Stroke style</button></li>
</ul>
<div class="page paint d-flex flex-column">
<div class="paints d-flex">
<button class="tool" aria-label="No paint"><svg width="18" height="18"><path d="m2 2 14 14M16 2 2 16" stroke="#000" stroke-width="4"/></svg></button>
<button class="tool on" aria-label="Flat color"><svg width="32" height="32"><path d="M1 1h30v30H1z" fill="#98b4d6" stroke="#222" stroke-width="2"/></svg></button>
<button class="tool" aria-label="Linear gradient"><svg width="32" height="32"><path d="M1 1h30v30H1z" fill="url(#gb2)" stroke="#222" stroke-width="2"/></svg></button>
<button class="tool" aria-label="Radial gradient"><svg width="32" height="32"><path d="M1 1h30v30H1z" fill="url(#gr)" stroke="#222" stroke-width="2"/></svg></button>
<button class="tool" aria-label="Pattern"><svg width="32" height="32"><path d="M1 1h30v30H1z" fill="#98b4d6"/><g fill="#fff"><circle cx="8" cy="6" r="4"/><circle cx="22" cy="6" r="4"/><circle cx="15" cy="12" r="4"/><circle cx="28" cy="12" r="3"/><circle cx="8" cy="17" r="4"/><circle cx="22" cy="17" r="4"/><circle cx="15" cy="23" r="4"/><circle cx="28" cy="23" r="3"/><circle cx="8" cy="28" r="3"/><circle cx="22" cy="28" r="3"/></g><path d="M1 1h30v30H1z" fill="none" stroke="#222" stroke-width="2"/></svg></button>
<button class="tool" aria-label="Swatch"><svg width="32" height="32"><path d="M1 1h30v30H1z" fill="#98b4d6" stroke="#3b4a5c" stroke-width="2"/><path d="M6 5h20v21H6z" fill="#fff"/><path d="M27 6v21H7" stroke="#333" stroke-width="2" fill="none"/></svg></button>
<button class="tool" aria-label="Unset"><svg width="24" height="32"><path d="M2 10Q3 1 12 1t10 8q0 5-5 8-3 2-3 5H9q-1-5 3-8 4-2 4-5 0-3-4-3t-4 5zM8 25h7v6H8z"/></svg></button>
</div>
<div class="fw-bold" style="margin-top:14px">Flat color</div>
<div class="modes d-flex" style="margin:10px 0 16px 1px"><button class="btn on">RGB</button><button class="btn">HSL</button><button class="btn">CMYK</button><button class="btn">Wheel</button><button class="btn">CMS</button></div>
<div class="chan">
<label for="r">R:</label><input type="range" id="r" max="255" value="0" style="--bar:linear-gradient(90deg,#000,#f00)"><div class="spin"><input aria-label="Red value" value="0"><span class="arrows"><button aria-label="More red"><svg width="14" height="12"><use href="#up"/></svg></button><button disabled aria-label="Less red"><svg width="14" height="12"><use href="#down"/></svg></button></span></div>
<label for="g">G:</label><input type="range" id="g" max="255" value="0" style="--bar:linear-gradient(90deg,#000,#0f0)"><div class="spin"><input aria-label="Green value" value="0"><span class="arrows"><button aria-label="More green"><svg width="14" height="12"><use href="#up"/></svg></button><button disabled aria-label="Less green"><svg width="14" height="12"><use href="#down"/></svg></button></span></div>
<label for="b">B:</label><input type="range" id="b" max="255" value="0" style="--bar:linear-gradient(90deg,#000,#00f)"><div class="spin"><input aria-label="Blue value" value="0"><span class="arrows"><button aria-label="More blue"><svg width="14" height="12"><use href="#up"/></svg></button><button disabled aria-label="Less blue"><svg width="14" height="12"><use href="#down"/></svg></button></span></div>
<label for="a">A:</label><input type="range" class="alpha" id="a" max="255" value="255" style="--bar:linear-gradient(90deg,#0000,#000),repeating-conic-gradient(#646464 0 25%,#9e9e9e 0 50%) 0 0/32px 32px"><div class="spin"><input aria-label="Alpha value" value="255"><span class="arrows"><button disabled aria-label="More alpha"><svg width="14" height="12"><use href="#up"/></svg></button><button aria-label="Less alpha"><svg width="14" height="12"><use href="#down"/></svg></button></span></div>
</div>
<div class="d-flex align-items-center mt-auto ms-1" style="gap:8px;font-size:21px">
<button class="ghost" aria-label="Color managed"><svg width="32" height="32"><use href="#cms"/></svg></button>
<button class="ghost" aria-label="Out of gamut"><svg width="32" height="32"><circle cx="16" cy="16" r="11" fill="none" stroke="#a00808" stroke-width="10"/><circle cx="16" cy="16" r="11" fill="none" stroke="url(#dither)" stroke-opacity=".6" stroke-width="10"/><circle cx="16" cy="16" r="15" fill="none" stroke="#444"/></svg></button>
<button class="ghost bg-transparent" style="margin-left:13px" aria-label="Pick color"><svg width="32" height="32"><path d="m19 11-13 13-2 7" fill="none" stroke="#567" stroke-width="4"/><path d="M18 12 6 24" stroke="#bcd2ea" stroke-width="2"/><path d="m14 8 4-2 5-5q4-2 7 1t1 6l-5 5-2 5z"/></svg></button>
<label class="ms-auto" for="hex" style="margin-right:-2px">RGBA:</label><input id="hex" class="rgba" value="000000ff">
</div>
</div>
<div class="meter spin" style="margin-top:9px"><div class="body"><label for="blur">Blur (%)</label><input id="blur" value="0.0"></div><span class="arrows"><button aria-label="More blur"><svg width="14" height="12"><use href="#up"/></svg></button><button disabled aria-label="Less blur"><svg width="14" height="12"><use href="#down"/></svg></button></span></div>
<div class="meter spin full" style="margin-top:12px"><div class="body"><label for="op">Opacity (%)</label><input id="op" value="100.0"></div><span class="arrows"><button disabled aria-label="More opacity"><svg width="14" height="12"><use href="#up"/></svg></button><button aria-label="Less opacity"><svg width="14" height="12"><use href="#down"/></svg></button></span></div>
</div>
<div class="dots" style="margin-top:4px"><i></i><i></i><i></i><i></i><i></i></div>
</aside>

<div class="snap d-flex flex-column flex-shrink-0" role="toolbar" aria-label="Snapping">
<button class="tool on" aria-label="Enable snapping"><svg width="36" height="32"><use href="#snapnode"/></svg></button>
<span class="hsep"></span>
<button class="tool" aria-label="Snap bounding boxes"><svg width="36" height="32"><use href="#snapnode"/></svg></button>
<button class="tool" aria-label="Bounding box edges"><svg width="36" height="32"><path d="M0 27h32" stroke="#5a8a5a" stroke-width="2" stroke-dasharray="5 2"/></svg></button>
<button class="tool" aria-label="Bounding box corners"><svg width="36" height="32"><path d="M0 27h32" stroke="#777" stroke-width="2" stroke-dasharray="5 2"/></svg></button>
<button class="tool" aria-label="Edge midpoints"><svg width="36" height="32"><path d="M0 26h32" stroke="#111" stroke-width="2" stroke-dasharray="12 2"/></svg></button>
<button class="tool" aria-label="Box centers"><svg width="36" height="32"><circle cx="7" cy="9" r="3" fill="#dde" stroke="#385" stroke-width="2"/><path d="M0 26h32" stroke="#111" stroke-width="2" stroke-dasharray="5 2"/></svg></button>
<span class="hsep"></span>
<button class="tool on" aria-label="Snap nodes"><svg width="36" height="32"><use href="#snapnode"/></svg></button>
<button class="tool" aria-label="Snap to paths"><svg width="36" height="32"><path d="M1 5q24 0 28 26" fill="none" stroke="#1a8a1a" stroke-width="3"/><circle cx="17" cy="28" r="3" fill="#1a8a1a"/></svg></button>
<button class="tool" aria-label="Path intersections"><svg width="36" height="32"><path d="m1 21 14-5h15M1 31 20 8" class="ln" style="stroke:#666"/><circle cx="16" cy="17" r="4" fill="#88c" stroke="#1a8a1a" stroke-width="3"/></svg></button>
<button class="tool" aria-label="Cusp nodes"><svg width="36" height="32"><path d="M1 3q14 2 26 12" class="ln" style="stroke:#777"/><circle cx="15" cy="27" r="4" fill="#99d" stroke="#3a9a4a" stroke-width="4"/></svg></button>
<button class="tool" aria-label="Smooth nodes"><svg width="36" height="32"><path d="M1 3q10 0 26 4M15 26h14" class="ln" style="stroke:#777"/><circle cx="14" cy="8" r="4" fill="#99d" stroke="#3a9a4a" stroke-width="3"/></svg></button>
<button class="tool" aria-label="Line midpoints"><svg width="36" height="32"><path d="M1 30 20 8" class="ln" style="stroke:#666"/><circle cx="16" cy="11" r="4" fill="#99d" stroke="#1a8a1a" stroke-width="3"/><path d="m3 16 9 12M8 12l1 16M2 22l10-4M3 27l9-5" stroke="#c22" stroke-width="2"/></svg></button>
<span class="hsep"></span>
<button class="tool on" aria-label="Snap other points"><svg width="36" height="32"><use href="#snapnode"/></svg></button>
<button class="tool" aria-label="Object centers"><svg width="36" height="32"><circle cx="8" cy="11" r="4" fill="#cde" stroke="#3a9a3a" stroke-width="3"/><path d="M0 27h32" stroke="#aaa" stroke-width="3"/></svg></button>
<button class="tool" aria-label="Rotation centers"><svg width="36" height="32"><path d="M2 12h16M10 5v14" stroke="#444" stroke-width="3"/><path d="M0 27h32" stroke="#888" stroke-width="3" stroke-dasharray="4 2"/></svg></button>
<button class="tool" aria-label="Text baselines"><svg width="36" height="32"><path d="M2 27 16 2h14v26H12z" fill="#222"/><circle cx="6" cy="26" r="4" fill="#99d" stroke="#3a9a4a" stroke-width="3"/></svg></button>
<span class="hsep"></span>
<button class="tool" aria-label="More" style="height:120px"><svg width="24" height="20"><path d="m3 3 9 7-9 7" fill="none" stroke="#8c8c86" stroke-width="4"/></svg></button>
</div>
</main>

<div class="palette d-flex flex-shrink-0" id="palette"></div>
<div class="foot flex-shrink-0"></div>

<script src="https://cdn.jsdelivr.net/npm/bootstrap@5.3.0/dist/js/bootstrap.bundle.min.js"></script>
<script>
// Palette swatches, one colour per button
const colors = '000000 1a1a1a 333333 4d4d4d 666666 808080 999999 b3b3b3 cccccc e6e6e6 ececec f2f2f2 f9f9f9 ffffff 800000 ff0000 808000 ffff00 008000 00ff00 008080 00ffff 000080 0000ff 800080 ff00ff 2b0000 550000 800000 aa0000 d40000 ff0000 ff2a2a ff5555 ff8080 ffaaaa ffd5d5 280b0b 501616 782121 a02c2c c83737 d35f5f de8787 e9afaf f4d7d7 241c1c 483737 6c5353 916f6f ac9393 c8b7b7 e3dbdb 2b1100 552200 803300 aa4400 d45500 ff6600 ff7f2a ff9955 ffb380 ffccaa ffe6d5 28170b 502d16 784421 a05a2c c87137 d38d5f deaa87 e9c6af f4e3d7 241f1c 483e37 6c5d53 917c6f ac9d93 c8beb7 e3dedb 2b2200 554400 806600 aa8800 d4aa00 ffcc00 ffd42a ffdd55 ffe680 ffeeaa fff6d5 28220b 504416 786721 a0892c c8ab37 d3bc5f'.split(' ');
document.getElementById('palette').innerHTML =
  '<button aria-label="None" style="background:#fff"><svg width="26" height="26"><path d="m0 0 26 26M26 0 0 26" stroke="#800000" stroke-width="2"/></svg></button>' +
  colors.map(c => `<button aria-label="#${c}" style="background:#${c}"></button>`).join('');

// Rulers: quarter-inch ticks, a label every two inches
const unit = 61.3;
let h = '<path d="M2 27H1742" stroke="#2e3436" stroke-width="2"/><path d="M503 18h18l-9 9z" fill="#2e3436"/><text x="3" y="20">8</text>';
for (let q = -31; q <= 82; q++) {
  const x = Math.round(479 + q * unit / 4), len = q % 8 === 0 ? 22 : q % 4 === 0 ? 10 : q % 2 === 0 ? 7 : 5;
  h += `<path d="M${x} ${27 - len}V27" stroke="#2e3436" stroke-width="2"/>`;
  if (q % 8 === 0) h += `<text x="${x + 3}" y="20">${String(q / 4).replace('-', '−')}</text>`;
}
document.getElementById('hruler').innerHTML = h;
let v = '<path d="M27 2V1032" stroke="#2e3436" stroke-width="2"/><path d="M18 281v18l9-9z" fill="#2e3436"/><text x="4" y="11">1</text><text x="4" y="23">0</text>';
for (let q = -28; q <= 39; q++) {
  const y = Math.round(602 - q * unit / 4), len = q % 8 === 0 ? 23 : q % 4 === 0 ? 11 : q % 2 === 0 ? 7 : 5;
  v += `<path d="M${27 - len} ${y}H27" stroke="#2e3436" stroke-width="2"/>`;
  if (q % 8 === 0) v += q < 0
    ? `<text x="3" y="${y + 15}">−</text><text x="4" y="${y + 30}">${-q / 4}</text>`
    : `<text x="4" y="${y + 15}">${q / 4}</text>`;
}
document.getElementById('vruler').innerHTML = v;
</script>
</body>
</html>
